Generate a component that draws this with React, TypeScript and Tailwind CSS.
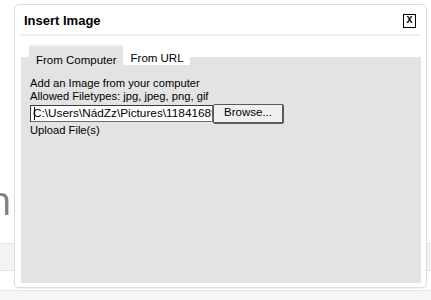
import React from 'react';

const App = () => {
  return (
    <div className="relative w-[431px] h-[300px] overflow-hidden bg-white font-['Liberation_Sans',Arial,sans-serif] text-black">
      {/* page behind the dialog */}
      <div className="relative h-[243px]">
        <span className="absolute left-[-13px] top-[176px] text-[40px] leading-[48px] font-normal text-[#808080] font-['Open_Sans',sans-serif]">n</span>
      </div>
      <div className="h-[28px] bg-[#f3f3f3] border-y border-[#e2e2e2]" />
      <div className="h-[19px]" />
      <div className="h-[10px] bg-[#f6f6f6] border-t border-[#e6e6e6]" />

      {/* dialog */}
      <div className="absolute left-[14px] top-[4px] w-[413px] h-[284px] bg-white border border-[#dcdcdc] rounded-[5px] shadow-[0_1px_2px_rgba(0,0,0,0.06)] flex flex-col">
        <div className="flex items-start justify-between pt-[8px] pl-[9px] pr-[10px]">
          <span className="text-[13px] leading-[15px] font-bold">Insert Image</span>
          <button className="mt-[1px] w-[13px] h-[14px] border border-black flex items-center justify-center text-[10px] leading-none font-bold font-['Liberation_Mono',monospace]">
            X
          </button>
        </div>
        <div className="mt-[6px] mx-[5px] h-[2px] bg-[#efefef]" />

        <div className="mx-[5px] ml-[6px] mt-[9px] flex-1 flex flex-col mb-[4px]">
          <div className="relative z-10 h-[12px] flex items-start pl-[8px] text-[11.5px] leading-[13px]">
            <div className="h-[21px] pl-[7px] pr-[6px] pt-[7px] bg-[#e3e3e3] border-t-2 border-[#efefef]">From Computer</div>
            <div className="mt-[2px] h-[18px] pl-[8px] pr-[6px] pt-[5px] bg-white">From URL</div>
          </div>
          <div className="flex-1 bg-[#e3e3e3] pt-[20px] pl-[9px] text-[11.2px] leading-[13px]">
            <div>Add an Image from your computer</div>
            <div>Allowed Filetypes: jpg, jpeg, png, gif</div>
            <div className="flex items-center h-[21px]">
              <div className="relative w-[183px] h-[17px] bg-white border border-[#6b6b6b] border-t-[#3a3a3a] border-l-[#3a3a3a] overflow-hidden whitespace-nowrap pl-[2px] text-[11.8px] leading-[15px]">
                <span className="absolute left-[3px] top-[1px] w-px h-[13px] bg-black" />
                C:\Users\NádZz\Pictures\11841689
              </div>
              <button className="w-[71px] h-[20px] bg-[#f0f0f0] border border-[#5a5a5a] border-b-2 border-r-2 rounded-[2px] text-[11.5px] leading-none">
                Browse...
              </button>
            </div>
            <div>Upload File(s)</div>
          </div>
        </div>
      </div>
    </div>
  );
};

export default App;
